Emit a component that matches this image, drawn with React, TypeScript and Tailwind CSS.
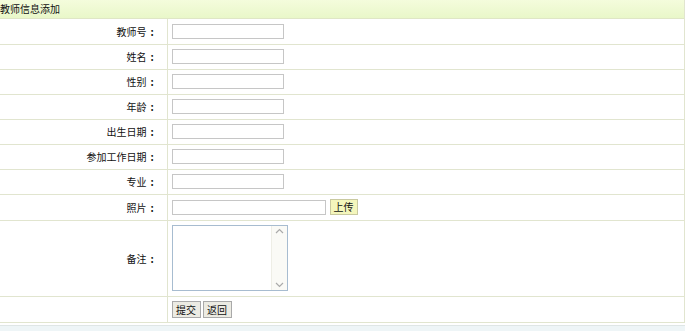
import React from "react";

const fields = ["教师号", "姓名", "性别", "年龄", "出生日期", "参加工作日期", "专业"];

const Label = ({ text }: { text: string }) => (
  <td className="w-[167px] border-b border-r border-[#e1e5cf] pr-[9px] text-right align-middle">
    {text}
    <span className="inline-block w-[11px] text-center font-bold">:</span>
  </td>
);

const TextInput = ({ w = "w-[112px]" }: { w?: string }) => (
  <input
    type="text"
    className={`${w} h-[15px] border border-[#c6c6c6] bg-white outline-none block`}
  />
);

const App = () => {
  return (
    <div
      className="w-[685px] h-[331px] bg-white text-[10px] text-[#111] overflow-hidden"
      style={{ fontFamily: '"Noto Sans CJK SC", "Liberation Sans", sans-serif' }}
    >
      <div className="border-r border-[#e1e5cf]">
        <div className="h-[19px] leading-[18px] border-b border-[#dfe6c6] bg-gradient-to-b from-[#f4fcdc] to-[#e9f7c9] text-[10px]">
          教师信息添加
        </div>
        <table className="w-full border-collapse">
          <tbody>
            {fields.map((f) => (
              <tr key={f} className="h-[25px]">
                <Label text={f} />
                <td className="border-b border-[#e1e5cf] pl-[4px]">
                  <TextInput />
                </td>
              </tr>
            ))}
            <tr className="h-[26px]">
              <Label text="照片" />
              <td className="border-b border-[#e1e5cf] pl-[4px]">
                <div className="flex items-center gap-[4px]">
                  <TextInput w="w-[154px]" />
                  <button className="h-[16px] w-[28px] leading-[14px] border border-[#c9c9a0] bg-[#f4f6bc] text-[10px]">
                    上传
                  </button>
                </div>
              </td>
            </tr>
            <tr className="h-[76px]">
              <Label text="备注" />
              <td className="border-b border-[#e1e5cf] pl-[4px]">
                <div className="relative w-[116px] h-[66px] border border-[#a7bcd0] bg-white">
                  <div className="absolute right-0 top-0 bottom-0 w-[16px] bg-[#fafaf6] border-l border-[#eeeee6] flex flex-col justify-between items-center py-[2px]">
                    <svg width="9" height="6" viewBox="0 0 9 6">
                      <path d="M1 5 L4.5 1.5 L8 5" fill="none" stroke="#aaa" strokeWidth="1.2" />
                    </svg>
                    <svg width="9" height="6" viewBox="0 0 9 6">
                      <path d="M1 1 L4.5 4.5 L8 1" fill="none" stroke="#aaa" strokeWidth="1.2" />
                    </svg>
                  </div>
                </div>
              </td>
            </tr>
            <tr className="h-[26px]">
              <td className="w-[167px] border-b border-r border-[#e1e5cf]"></td>
              <td className="border-b border-[#e1e5cf] pl-[4px]">
                <div className="flex gap-[2px]">
                  <button className="h-[17px] w-[29px] leading-[15px] border border-[#a9a9a9] bg-[#ecebe3] text-[10px]">
                    提交
                  </button>
                  <button className="h-[17px] w-[29px] leading-[15px] border border-[#a9a9a9] bg-[#ecebe3] text-[10px]">
                    返回
                  </button>
                </div>
              </td>
            </tr>
          </tbody>
        </table>
      </div>
      <div className="h-[3px] border-b border-[#dfe6e6]"></div>
      <div className="h-full bg-[#eef5f7]"></div>
    </div>
  );
};

export default App;
